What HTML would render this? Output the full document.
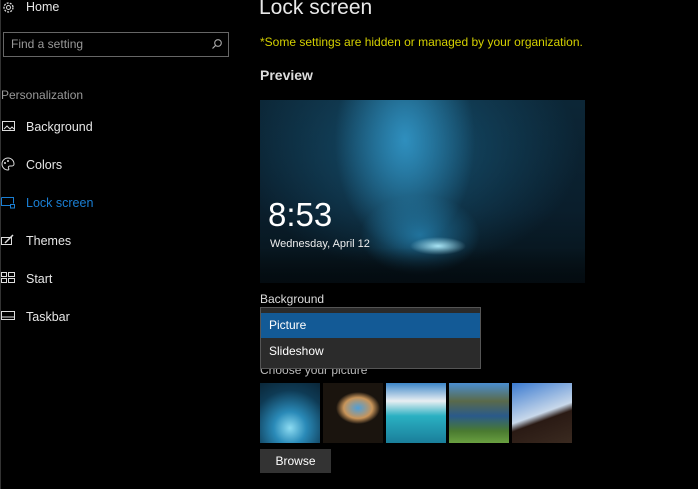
<!DOCTYPE html>
<html><head><meta charset="utf-8"><style>
*{margin:0;padding:0;box-sizing:border-box}
body{width:698px;height:489px;background:#000;font-family:"Liberation Sans",sans-serif;color:#fff;position:relative;overflow:hidden}
.a{position:absolute}
.nav{font-size:12.5px;color:#e6e6e6}
svg{position:absolute}
</style></head><body>
<div class="a" style="left:0;top:0;width:1px;height:489px;background:#333"></div>
<svg style="left:2px;top:1px" width="13" height="13" viewBox="0 0 13 13"><circle cx="6.5" cy="6.5" r="4.5" fill="none" stroke="#ddd" stroke-width="1.3" stroke-dasharray="2 1.2"/><circle cx="6.5" cy="6.5" r="2" fill="none" stroke="#ddd"/></svg>
<div class="a nav" style="left:26px;top:0px">Home</div>
<div class="a" style="left:3px;top:32px;width:226px;height:25px;border:1px solid #666"></div>
<div class="a" style="left:11px;top:37px;font-size:12px;color:#999">Find a setting</div>
<svg style="left:211px;top:38px" width="12" height="12" viewBox="0 0 12 12"><circle cx="7" cy="5" r="3.3" fill="none" stroke="#aaa" stroke-width="1.1"/><line x1="4.6" y1="7.4" x2="1.5" y2="10.5" stroke="#aaa" stroke-width="1.2"/></svg>
<div class="a" style="left:1px;top:88px;font-size:12px;color:#999">Personalization</div>
<svg style="left:2px;top:121px" width="13" height="11" viewBox="0 0 13 11"><rect x=".5" y=".5" width="12" height="9" fill="none" stroke="#ddd"/><path d="M2 8l3-3 3 3 2-2 2 2" fill="none" stroke="#ddd"/></svg>
<div class="a nav" style="left:26px;top:120px">Background</div>
<svg style="left:1px;top:157px" width="14" height="14" viewBox="0 0 14 14"><path d="M7 1a6 6 0 1 0 0 12c1 0 1-1 .5-2s0-2 1.5-2h2a2 2 0 0 0 2-2A6 6 0 0 0 7 1z" fill="none" stroke="#ddd"/><circle cx="4" cy="6" r="1" fill="#ddd"/><circle cx="7" cy="4" r="1" fill="#ddd"/></svg>
<div class="a nav" style="left:26px;top:158px">Colors</div>
<svg style="left:1px;top:197px" width="15" height="12" viewBox="0 0 15 12"><path d="M.5 .5h12v6M10 8.5H.5v-8" fill="none" stroke="#1a7fd4"/><rect x="9.5" y="7.5" width="4" height="3.5" fill="none" stroke="#1a7fd4"/></svg>
<div class="a nav" style="left:26px;top:196px;color:#1a7fd4">Lock screen</div>
<svg style="left:1px;top:234px" width="14" height="12" viewBox="0 0 14 12"><rect x=".5" y="3.5" width="10" height="7" fill="none" stroke="#ddd"/><path d="M4 9l8-8" stroke="#ddd" stroke-width="1.5"/></svg>
<div class="a nav" style="left:26px;top:234px">Themes</div>
<svg style="left:1px;top:272px" width="14" height="11" viewBox="0 0 14 11"><rect x=".5" y=".5" width="5" height="4" fill="none" stroke="#ddd"/><rect x="7.5" y=".5" width="6" height="4" fill="none" stroke="#ddd"/><rect x=".5" y="6.5" width="5" height="4" fill="none" stroke="#ddd"/><rect x="7.5" y="6.5" width="6" height="4" fill="none" stroke="#ddd"/></svg>
<div class="a nav" style="left:26px;top:272px">Start</div>
<svg style="left:1px;top:311px" width="14" height="9" viewBox="0 0 14 9"><rect x=".5" y=".5" width="13" height="8" fill="none" stroke="#ddd"/><line x1="1" y1="6" x2="13" y2="6" stroke="#ddd"/></svg>
<div class="a nav" style="left:26px;top:310px">Taskbar</div>

<div class="a" style="left:259px;top:-4px;font-size:21px;color:#e8e8e8">Lock screen</div>
<div class="a" style="left:260px;top:35px;font-size:12px;color:#d4d000">*Some settings are hidden or managed by your organization.</div>
<div class="a" style="left:260px;top:67px;font-size:14px;font-weight:bold;color:#ddd">Preview</div>
<div class="a" style="left:260px;top:100px;width:325px;height:183px;background:radial-gradient(ellipse 28px 9px at 178px 146px,#a8e4f4,transparent),radial-gradient(ellipse 70px 110px at 145px 40px,#2f8fbe,transparent),radial-gradient(ellipse 60px 40px at 160px 135px,#1f6f98,transparent),radial-gradient(ellipse 170px 120px at 150px 50px,#154f6e,transparent),linear-gradient(#0c2636,#0a1e2c 60%,#061218);overflow:hidden">
<div class="a" style="left:0;bottom:0;width:325px;height:35px;background:linear-gradient(transparent,#040b10)"></div>
<div class="a" style="left:8px;top:96px;font-size:33px;color:#fff">8:53</div>
<div class="a" style="left:10px;top:138px;font-size:11px;color:#eee">Wednesday, April 12</div>
</div>
<div class="a" style="left:260px;top:292px;font-size:12px;color:#ddd">Background</div>
<div class="a" style="left:260px;top:363px;font-size:12px;color:#bbb">Choose your picture</div>
<div class="a" style="left:260px;top:307px;width:221px;height:62px;background:#2b2b2b;border:1px solid #555"></div>
<div class="a" style="left:261px;top:313px;width:219px;height:25px;background:#135a96"></div>
<div class="a" style="left:269px;top:318px;font-size:12px;color:#fff">Picture</div>
<div class="a" style="left:269px;top:344px;font-size:12px;color:#fff">Slideshow</div>

<div class="a" style="left:260px;top:383px;width:60px;height:60px;background:radial-gradient(circle at 30px 45px,#8ddcf2,#2a8ab8 30%,#0e3a54 70%,#0a2638)"></div>
<div class="a" style="left:323px;top:383px;width:60px;height:60px;background:radial-gradient(ellipse 22px 16px at 35px 25px,#4f9fd8,#c9955a 65%,#1a140e 100%)"></div>
<div class="a" style="left:386px;top:383px;width:60px;height:60px;background:linear-gradient(#3c86c8,#e8eef2 30%,#2ab0c2 55%,#1a7e9a)"></div>
<div class="a" style="left:449px;top:383px;width:60px;height:60px;background:linear-gradient(#4a8ed0,#5a6a4a 30%,#2a5a8a 55%,#4a7a30 80%,#6aa040)"></div>
<div class="a" style="left:512px;top:383px;width:60px;height:60px;background:linear-gradient(160deg,#3a7ad0,#c8d8ea 50%,#2a1a14 60%,#3a2a20)"></div>
<div class="a" style="left:260px;top:449px;width:71px;height:24px;background:#333"></div>
<div class="a" style="left:260px;top:454px;width:71px;text-align:center;font-size:12px;color:#fff">Browse</div>
</body></html>
